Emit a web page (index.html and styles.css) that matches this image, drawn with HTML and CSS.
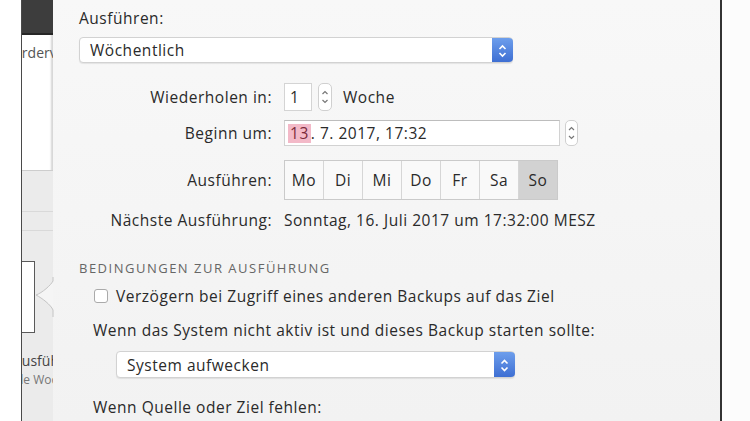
FILE: index.html
```html
<!DOCTYPE html>
<html lang="de">
<head>
    <meta charset="UTF-8">
    <meta name="viewport" content="width=device-width, initial-scale=1.0">
    <title>Backup planen</title>
    <link rel="stylesheet" href="styles.css">
</head>
<body>

    <div class="screen">
        <div class="gutter"></div>

        <!-- Sidebar of the main window, mostly hidden behind the sheet -->
        <aside class="sidebar">
            <div class="sidebar-head"></div>
            <div class="sidebar-item">erderv</div>
            <div class="sidebar-blank"></div>
            <div class="sidebar-list">
                <div class="sidebar-row"></div>
                <div class="sidebar-row short"></div>
                <div class="sidebar-card"></div>
                <div class="sidebar-title">Ausführen</div>
                <div class="sidebar-sub">Jede Woche</div>
            </div>
            <svg class="sheet-arrow" width="20" height="40" viewBox="0 0 20 40">
                <path d="M19 0 L19 4 C17 8 8 16 2 18 C8 21 17 28 19 33 L19 40" fill="#f5f5f5" stroke="#c4c4c4" stroke-width="1"/>
            </svg>
        </aside>

        <main class="sheet">
            <div class="run-label">Ausführen:</div>
            <div class="popup">
                <span class="popup-text">Wöchentlich</span>
                <span class="popup-btn">
                    <svg width="21" height="26" viewBox="0 0 21 26">
                        <path d="M7.5 11 L10.5 8 L13.5 11" fill="none" stroke="#fff" stroke-width="1.6"/>
                        <path d="M7.5 15 L10.5 18 L13.5 15" fill="none" stroke="#fff" stroke-width="1.6"/>
                    </svg>
                </span>
            </div>

            <div class="row row-repeat">
                <div class="row-label">Wiederholen in:</div>
                <div class="num-field">1</div>
                <div class="stepper">
                    <svg width="14" height="28" viewBox="0 0 14 28">
                        <path d="M4.5 11 L7 8.5 L9.5 11" fill="none" stroke="#777" stroke-width="1.2"/>
                        <path d="M4.5 17 L7 19.5 L9.5 17" fill="none" stroke="#777" stroke-width="1.2"/>
                    </svg>
                </div>
                <div class="unit">Woche</div>
            </div>

            <div class="row row-start">
                <div class="row-label">Beginn um:</div>
                <div class="date-field"><span class="date-sel">13</span>. 7. 2017, 17:32</div>
                <div class="stepper small">
                    <svg width="13" height="26" viewBox="0 0 13 26">
                        <path d="M4 10 L6.5 7.5 L9 10" fill="none" stroke="#777" stroke-width="1.2"/>
                        <path d="M4 16 L6.5 18.5 L9 16" fill="none" stroke="#777" stroke-width="1.2"/>
                    </svg>
                </div>
            </div>

            <div class="row row-days">
                <div class="row-label">Ausführen:</div>
                <div class="days">
                    <span class="day">Mo</span>
                    <span class="day">Di</span>
                    <span class="day">Mi</span>
                    <span class="day">Do</span>
                    <span class="day">Fr</span>
                    <span class="day">Sa</span>
                    <span class="day selected">So</span>
                </div>
            </div>

            <div class="row row-next">
                <div class="row-label">Nächste Ausführung:</div>
                <div class="next-value">Sonntag, 16. Juli 2017 um 17:32:00 MESZ</div>
            </div>

            <div class="section-title">BEDINGUNGEN ZUR AUSFÜHRUNG</div>

            <label class="check-row">
                <span class="checkbox"></span>
                Verzögern bei Zugriff eines anderen Backups auf das Ziel
            </label>

            <div class="note">Wenn das System nicht aktiv ist und dieses Backup starten sollte:</div>

            <div class="popup popup-wake">
                <span class="popup-text">System aufwecken</span>
                <span class="popup-btn">
                    <svg width="21" height="27" viewBox="0 0 21 27">
                        <path d="M7.5 11.5 L10.5 8.5 L13.5 11.5" fill="none" stroke="#fff" stroke-width="1.6"/>
                        <path d="M7.5 15.5 L10.5 18.5 L13.5 15.5" fill="none" stroke="#fff" stroke-width="1.6"/>
                    </svg>
                </span>
            </div>

            <div class="note note-last">Wenn Quelle oder Ziel fehlen:</div>
        </main>

        <div class="gutter-right"></div>
    </div>

</body>
</html>
```

FILE: styles.css
```css
body {
    margin: 0;
    font-family: "Open Sans", "Liberation Sans", Arial, sans-serif;
    font-size: 15.5px;
    letter-spacing: 0.52px;
    color: #2a2a2a;
    background: #fff;
}

.screen {
    display: flex;
    height: 421px;
    overflow: hidden;
}

.gutter {
    width: 21px;
    background: #fff;
}

.gutter-right {
    flex: 1;
    background: #fcfcfc;
}

/* sidebar */

.sidebar {
    position: relative;
    width: 31px;
    border-left: 1px solid #4a4a4a;
    background: #fff;
    display: flex;
    flex-direction: column;
    box-shadow: inset -3px 0 2px -1px #d6d6d6;
}

.sidebar-head {
    height: 33px;
    background: #3d3d3d;
    border-bottom: 2px solid #262626;
}

.sidebar-item {
    height: 36px;
    line-height: 36px;
    text-indent: -8px;
    white-space: nowrap;
    overflow: hidden;
    color: #555;
    font-size: 14px;
    letter-spacing: 0;
}

.sidebar-blank {
    height: 99px;
}

.sidebar-list {
    flex: 1;
    background: #ebebeb;
    border-top: 1px solid #cdcdcd;
    overflow: hidden;
}

.sidebar-row {
    height: 40px;
    border-bottom: 1px solid #d9d9d9;
}

.sidebar-row.short {
    height: 18px;
}

.sidebar-card {
    margin-top: 30px;
    width: 12px;
    height: 70px;
    background: #fff;
    border: 1px solid #5a5a5a;
    border-left: none;
}

.sidebar-title {
    margin-top: 19px;
    text-indent: -9px;
    white-space: nowrap;
    color: #444;
    font-size: 14px;
    letter-spacing: 0;
    line-height: 18px;
}

.sidebar-sub {
    margin-top: 2px;
    text-indent: -16px;
    white-space: nowrap;
    color: #777;
    font-size: 12px;
    letter-spacing: 0;
    line-height: 16px;
}

.sheet-arrow {
    position: absolute;
    right: -1px;
    top: 277px;
}

/* sheet */

.sheet {
    width: 641px;
    padding-left: 26px;
    background: linear-gradient(to bottom, #f8f8f8, #f2f2f2);
    border-right: 2px solid #333;
}

.run-label {
    margin-top: 8px;
    line-height: 20px;
}

.popup {
    margin-top: 9px;
    width: 432px;
    height: 24px;
    display: flex;
    align-items: center;
    justify-content: space-between;
    background: #fff;
    border: 1px solid #d2d2d2;
    border-radius: 4px;
    box-shadow: 0 1px 1px rgba(0, 0, 0, 0.08);
}

.popup-text {
    padding-left: 10px;
}

.popup-btn {
    display: flex;
    width: 21px;
    height: 100%;
    margin-right: -1px;
    border-radius: 0 4px 4px 0;
    background: linear-gradient(to bottom, #6d9eec, #3e6fd3);
}

.popup-wake {
    margin-top: 13px;
    margin-left: 37px;
    width: 397px;
    height: 25px;
}

.row {
    display: flex;
    align-items: center;
}

.row-label {
    width: 193px;
    margin-right: 12px;
    text-align: right;
}

.row-repeat {
    margin-top: 20px;
    height: 28px;
}

.num-field {
    box-sizing: border-box;
    width: 28px;
    height: 28px;
    line-height: 26px;
    padding-left: 5px;
    background: #fff;
    border: 1px solid #d4d4d4;
}

.stepper {
    box-sizing: border-box;
    display: flex;
    margin-left: 6px;
    width: 14px;
    height: 28px;
    background: #fff;
    border: 1px solid #d0d0d0;
    border-radius: 5px;
}

.stepper svg {
    margin: -1px;
}

.stepper.small {
    margin-left: 5px;
    width: 13px;
    height: 26px;
}

.unit {
    margin-left: 11px;
}

.row-start {
    margin-top: 9px;
    height: 26px;
}

.date-field {
    box-sizing: border-box;
    width: 276px;
    height: 26px;
    line-height: 24px;
    padding-left: 3px;
    background: #fff;
    border: 1px solid #d2d2d2;
    border-top-color: #bdbdbd;
}

.date-sel {
    display: inline-block;
    padding: 0 2px;
    line-height: 19px;
    background: #f3b9c8;
    color: #7a2a3a;
}

.row-days {
    margin-top: 15px;
    height: 38px;
}

.days {
    display: flex;
    height: 38px;
    border: 1px solid #cacaca;
    background: #f9f9f9;
}

.day {
    width: 38px;
    display: flex;
    align-items: center;
    justify-content: center;
    border-right: 1px solid #d6d6d6;
}

.day:last-child {
    border-right: none;
}

.day.selected {
    background: #d2d2d2;
}

.row-next {
    margin-top: 10px;
    height: 22px;
}

.section-title {
    margin-top: 29px;
    line-height: 16px;
    font-size: 13px;
    letter-spacing: 1.5px;
    color: #666;
}

.check-row {
    display: flex;
    align-items: center;
    margin-top: 12px;
    margin-left: 15px;
    height: 16px;
}

.checkbox {
    box-sizing: border-box;
    width: 14px;
    height: 14px;
    margin-right: 8px;
    background: #fff;
    border: 1px solid #aaa;
    border-radius: 3px;
}

.note {
    margin-top: 18px;
    margin-left: 14px;
    line-height: 16px;
}

.note-last {
    margin-top: 21px;
}
```
